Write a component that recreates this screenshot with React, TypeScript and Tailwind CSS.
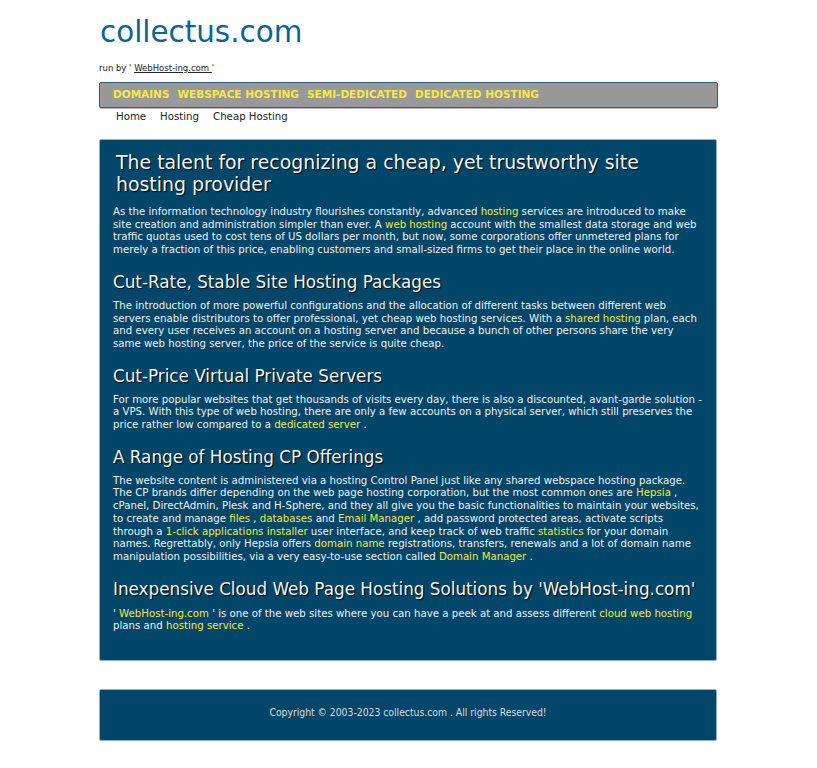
import React from "react";

const Y = ({ children }: { children: React.ReactNode }) => (
  <a href="#" className="text-[#f2ea3a]">
    {children}
  </a>
);

export default function App() {
  const h2 = "text-[16.8px] leading-[20px] text-[#f4f4f4] [text-shadow:1px_1px_1px_#000] mt-[15px] mb-[8px]";
  return (
    <div className="min-h-[768px] bg-white font-['DejaVu_Sans',sans-serif]">
      <div className="w-[619px] mx-auto pt-[15px]">
        {/* Header */}
        <h1 className="text-[29.4px] leading-[34px] text-[#0b6493] ml-px">collectus.com</h1>
        <p className="text-[8.5px] leading-[10px] mt-[14px] text-[#222]">
          run by ' <a href="#" className="underline">WebHost-ing.com </a>'
        </p>

        {/* Nav */}
        <div className="mt-[9px] h-[26px] bg-[#999999] border border-[#2f5f7f] rounded-[2px] shadow-[0_1px_1px_rgba(0,0,0,0.3)] flex items-center gap-[8px] pl-[13px] text-[10.5px] font-bold text-[#f6ea3c]">
          <a href="#">DOMAINS</a>
          <a href="#">WEBSPACE HOSTING</a>
          <a href="#">SEMI-DEDICATED</a>
          <a href="#">DEDICATED HOSTING</a>
        </div>
        <div className="flex gap-[14px] pl-[17px] mt-[3px] text-[10.2px] leading-[12px] text-[#222]">
          <a href="#">Home</a>
          <a href="#">Hosting</a>
          <a href="#">Cheap Hosting</a>
        </div>

        {/* Main */}
        <main className="mt-[16px] h-[522px] w-[618px] bg-[#02476a] border border-[#8fb0c6] rounded-[2px] pl-[13px] pr-[12px] pt-[11px] text-[10.2px] leading-[12.7px] text-[#f0f0f0]">
          <h2 className="text-[18.9px] leading-[22px] text-[#f4f4f4] [text-shadow:1px_1px_1px_#000] pl-[3px] mb-[11px]">
            The talent for recognizing a cheap, yet trustworthy site hosting provider
          </h2>
          <p>
            As the information technology industry flourishes constantly, advanced <Y>hosting</Y> services are introduced to make site creation and administration simpler than ever. A <Y>web hosting</Y> account with the smallest data storage and web traffic quotas used to cost tens of US dollars per month, but now, some corporations offer unmetered plans for merely a fraction of this price, enabling customers and small-sized firms to get their place in the online world.
          </p>

          <h3 className={h2}>Cut-Rate, Stable Site Hosting Packages</h3>
          <p>
            The introduction of more powerful configurations and the allocation of different tasks between different web servers enable distributors to offer professional, yet cheap web hosting services. With a <Y>shared hosting</Y> plan, each and every user receives an account on a hosting server and because a bunch of other persons share the very same web hosting server, the price of the service is quite cheap.
          </p>

          <h3 className={h2}>Cut-Price Virtual Private Servers</h3>
          <p>
            For more popular websites that get thousands of visits every day, there is also a discounted, avant-garde solution - a VPS. With this type of web hosting, there are only a few accounts on a physical server, which still preserves the price rather low compared to a <Y>dedicated server</Y> .
          </p>

          <h3 className={h2}>A Range of Hosting CP Offerings</h3>
          <p>
            The website content is administered via a hosting Control Panel just like any shared webspace hosting package. The CP brands differ depending on the web page hosting corporation, but the most common ones are <Y>Hepsia</Y> , cPanel, DirectAdmin, Plesk and H-Sphere, and they all give you the basic functionalities to maintain your websites, to create and manage <Y>files</Y> , <Y>databases</Y> and <Y>Email Manager</Y> , add password protected areas, activate scripts through a <Y>1-click applications installer</Y> user interface, and keep track of web traffic <Y>statistics</Y> for your domain names. Regrettably, only Hepsia offers <Y>domain name</Y> registrations, transfers, renewals and a lot of domain name manipulation possibilities, via a very easy-to-use section called <Y>Domain Manager</Y> .
          </p>

          <h3 className={h2 + " !mb-[9px]"}>Inexpensive Cloud Web Page Hosting Solutions by 'WebHost-ing.com'</h3>
          <p>
            ' <Y>WebHost-ing.com</Y> ' is one of the web sites where you can have a peek at and assess different <Y>cloud web hosting</Y> plans and <Y>hosting service</Y> .
          </p>
        </main>

        {/* Footer */}
        <footer className="mt-[28px] h-[52px] w-[618px] bg-[#02476a] border border-[#8fb0c6] rounded-[2px] flex items-center justify-center pb-[4px] text-[10.3px] text-[#dddddd] font-['DejaVu_Sans_Condensed','DejaVu_Sans',sans-serif]">
          Copyright © 2003-2023 collectus.com . All rights Reserved!
        </footer>
      </div>
    </div>
  );
}
